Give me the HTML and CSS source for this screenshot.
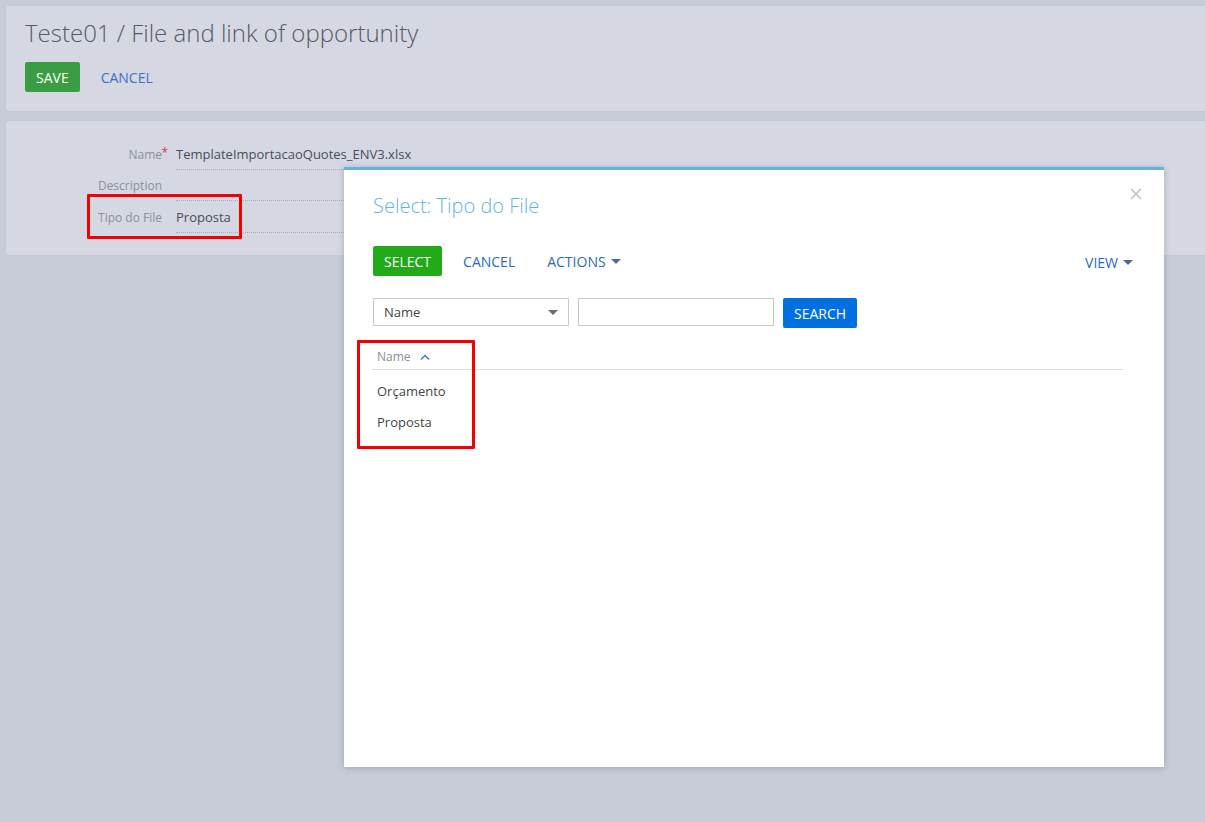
FILE: index.html
```html
<!DOCTYPE html>
<html lang="en">
<head>
    <meta charset="UTF-8">
    <meta name="viewport" content="width=device-width, initial-scale=1.0">
    <title>Teste01 / File and link of opportunity</title>
    <link rel="stylesheet" href="styles.css">
</head>
<body>

    <div class="page">
        <div class="panel page-header">
            <h1 class="page-title">Teste01 / File and link of opportunity</h1>
            <div class="actions">
                <button class="btn btn-save">SAVE</button>
                <button class="btn-link">CANCEL</button>
            </div>
        </div>

        <div class="panel form-panel">
            <div class="form-row">
                <div class="form-label">Name<span class="required">*</span></div>
                <div class="form-value">TemplateImportacaoQuotes_ENV3.xlsx</div>
            </div>
            <div class="form-row">
                <div class="form-label">Description</div>
                <div class="form-value"></div>
            </div>
            <div class="form-row marked">
                <div class="form-label">Tipo do File</div>
                <div class="form-value">Proposta</div>
            </div>
        </div>
    </div>

    <!-- lookup dialog -->
    <div class="modal">
        <button class="modal-close" aria-label="Close">
            <svg width="12" height="12" viewBox="0 0 12 12"><path d="M1 1 L11 11 M11 1 L1 11" stroke="#b9b9b9" stroke-width="1.2" fill="none"/></svg>
        </button>
        <h2 class="modal-title">Select: Tipo do File</h2>

        <div class="modal-toolbar">
            <button class="btn btn-select">SELECT</button>
            <button class="btn-link">CANCEL</button>
            <button class="btn-link">ACTIONS <span class="caret"></span></button>
            <button class="btn-link view-btn">VIEW <span class="caret"></span></button>
        </div>

        <div class="filter-row">
            <div class="filter-select">Name <span class="caret gray"></span></div>
            <input class="filter-input" type="text">
            <button class="btn btn-search">SEARCH</button>
        </div>

        <div class="grid">
            <div class="grid-head">
                <span>Name</span>
                <svg width="10" height="6" viewBox="0 0 10 6"><path d="M1 5.5 L5 1.5 L9 5.5" stroke="#3f6fc4" stroke-width="1.3" fill="none"/></svg>
            </div>
            <div class="grid-row">Orçamento</div>
            <div class="grid-row">Proposta</div>
            <div class="mark-box"></div>
        </div>
    </div>

</body>
</html>
```

FILE: styles.css
```css
body {
    margin: 0;
    background-color: #c8cbd8;
    font-family: "Open Sans", Arial, sans-serif;
    width: 1205px;
    height: 822px;
    overflow: hidden;
    position: relative;
}
button {
    font-family: inherit;
    cursor: pointer;
}
.page {
    padding: 5px 0 0 5px;
}
.panel {
    background-color: #d5d8e3;
    border: 1px solid #c6c9d5;
    border-right: none;
    border-radius: 3px 0 0 3px;
}
.page-header {
    height: 107px;
    box-sizing: border-box;
    padding: 13px 19px;
}
.page-title {
    margin: 0;
    font-size: 24px;
    font-weight: 300;
    color: #555965;
    line-height: 28px;
}
.actions {
    display: flex;
    align-items: center;
    margin-top: 15px;
}
.btn {
    border: none;
    border-radius: 2px;
    color: #fff;
    font-size: 14px;
    height: 30px;
    padding: 0 11px;
}
.btn-save {
    background-color: #3b9d43;
    padding: 0 11px;
}
.btn-link {
    background: none;
    border: none;
    color: #3f6fc4;
    font-size: 14px;
    padding: 0;
    margin-left: 21px;
    display: flex;
    align-items: center;
}
.form-panel {
    margin-top: 8px;
    height: 136px;
    box-sizing: border-box;
    padding-top: 25px;
}
.form-row {
    display: flex;
    align-items: flex-end;
    height: 32px;
    position: relative;
}
.form-row:first-child {
    height: 24px;
}
.form-row:nth-child(2) {
    height: 31px;
}
.form-label {
    width: 156px;
    text-align: right;
    font-size: 12px;
    color: #8c8f9a;
    padding-bottom: 7px;
    position: relative;
}
.required {
    color: #d2404a;
    position: absolute;
    right: -6px;
    top: -2px;
}
.form-value {
    margin-left: 14px;
    width: 300px;
    height: 100%;
    box-sizing: border-box;
    border-bottom: 1px dotted #a9acb8;
    font-size: 13px;
    color: #4a4d57;
    display: flex;
    align-items: flex-end;
    padding-bottom: 6px;
}
.form-row.marked::after {
    content: "";
    position: absolute;
    left: 81px;
    top: -7px;
    width: 149px;
    height: 39px;
    border: 3px solid #f40000;
    border-radius: 1px;
}

/* lookup dialog */
.modal {
    position: absolute;
    left: 344px;
    top: 167px;
    width: 820px;
    height: 600px;
    box-sizing: border-box;
    background-color: #fff;
    border-top: 3px solid #63b4dd;
    box-shadow: 0 1px 6px rgba(80, 85, 100, 0.35);
    padding: 22px 29px;
}
.modal-close {
    position: absolute;
    right: 22px;
    top: 18px;
    background: none;
    border: none;
    padding: 0;
    width: 12px;
    height: 12px;
}
.modal-close svg {
    display: block;
}
.modal-title {
    margin: 0;
    font-size: 20px;
    font-weight: 300;
    color: #5fb3e3;
    line-height: 28px;
}
.modal-toolbar {
    display: flex;
    align-items: center;
    margin-top: 26px;
}
.btn-select {
    background-color: #22aa19;
    padding: 0 11px;
}
.modal-toolbar .btn-link {
    color: #2a68c8;
}
.modal-toolbar .btn-link + .btn-link {
    margin-left: 32px;
}
.modal-toolbar .btn-link.view-btn {
    margin-left: auto;
    margin-right: 2px;
    margin-top: 2px;
}
.caret {
    display: inline-block;
    width: 0;
    height: 0;
    border-left: 5px solid transparent;
    border-right: 5px solid transparent;
    border-top: 5px solid #4f6897;
    margin-left: 5px;
}
.caret.gray {
    border-top-color: #6d6d6d;
    margin-left: auto;
}
.filter-row {
    display: flex;
    align-items: flex-start;
    margin-top: 22px;
}
.filter-select {
    width: 196px;
    height: 28px;
    box-sizing: border-box;
    border: 1px solid #c8c8c8;
    display: flex;
    align-items: center;
    padding: 0 10px;
    font-size: 13px;
    color: #444;
}
.filter-input {
    width: 196px;
    height: 28px;
    box-sizing: border-box;
    border: 1px solid #c8c8c8;
    margin: 0 0 0 9px;
    padding: 0 6px;
}
.btn-search {
    background-color: #0070e0;
    margin-left: 9px;
    padding: 0 11px;
}
.grid {
    position: relative;
    margin-top: 14px;
    width: 751px;
    margin-left: -1px;
}
.grid-head {
    height: 28px;
    box-sizing: border-box;
    border-bottom: 1px solid #dcdcdc;
    display: flex;
    align-items: center;
    padding-left: 5px;
    padding-top: 2px;
    font-size: 12px;
    color: #8b8e99;
}
.grid-head svg {
    margin-left: 9px;
}
.grid-row {
    height: 31px;
    display: flex;
    align-items: center;
    padding-left: 5px;
    font-size: 13px;
    color: #444;
}
.grid-row:nth-child(2) {
    margin-top: 5px;
}
.mark-box {
    position: absolute;
    left: -15px;
    top: -2px;
    width: 112px;
    height: 103px;
    border: 3px solid #f40000;
    border-radius: 1px;
}
```
